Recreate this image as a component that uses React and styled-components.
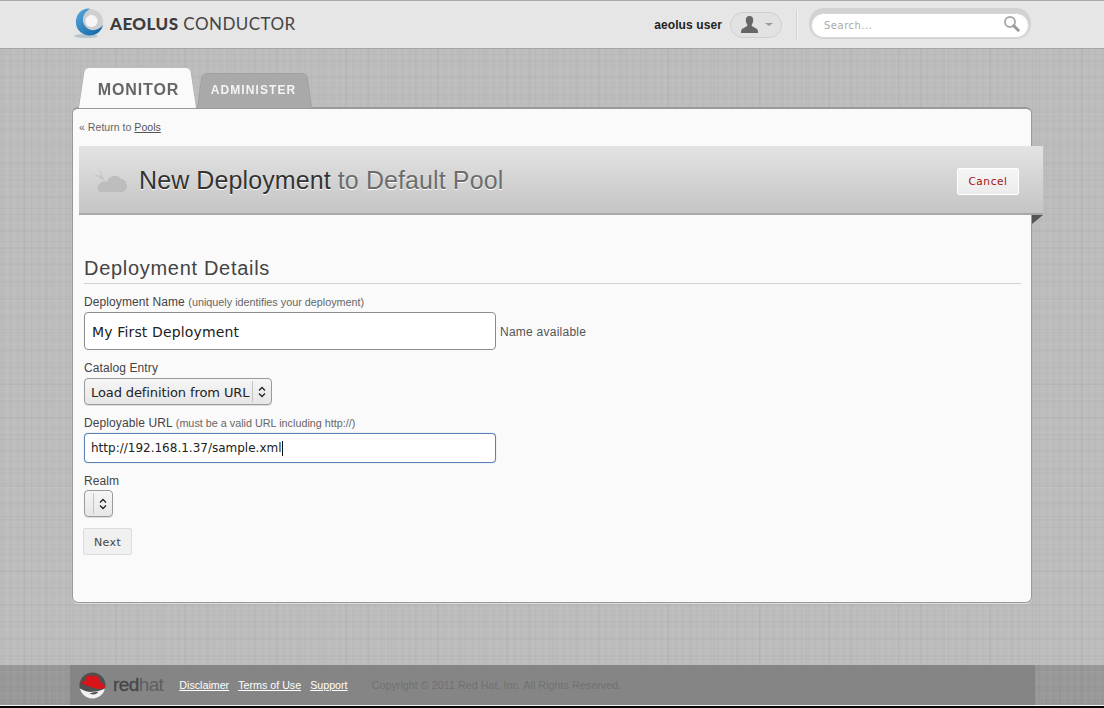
import React from 'react'
import styled, { createGlobalStyle } from 'styled-components'

const GlobalStyle = createGlobalStyle`
  html, body {
    margin: 0;
    padding: 0;
    background: #000;
  }
  * {
    box-sizing: border-box;
  }
`

const linen = `
  repeating-linear-gradient(90deg, rgba(255,255,255,.035) 0 1px, transparent 1px 3px, rgba(0,0,0,.025) 3px 4px, transparent 4px 7px),
  repeating-linear-gradient(0deg, rgba(255,255,255,.03) 0 1px, transparent 1px 4px, rgba(0,0,0,.025) 4px 5px, transparent 5px 11px),
  repeating-linear-gradient(90deg, rgba(0,0,0,.02) 0 2px, transparent 2px 23px),
  repeating-linear-gradient(0deg, rgba(0,0,0,.018) 0 2px, transparent 2px 17px)
`

const Page = styled.div`
  width: 1104px;
  height: 708px;
  overflow: hidden;
  display: flex;
  flex-direction: column;
  background-color: #bdbdbd;
  background-image: ${linen};
  font-family: 'Liberation Sans', Arial, sans-serif;
  color: #444;
`

const Header = styled.header`
  height: 49px;
  flex: none;
  display: flex;
  align-items: center;
  padding: 0 73px 0 73px;
  background: #e6e6e6;
  border-top: 1px solid #a9a9a9;
  border-bottom: 1px solid #a6a6a6;
`

const Brand = styled.div`
  display: flex;
  align-items: center;
  gap: 5px;
  margin-top: -3px;
`

const BrandName = styled.div`
  font-family: Lato, 'Liberation Sans', sans-serif;
  font-size: 17px;
  letter-spacing: 0.45px;
  color: #444;
  white-space: nowrap;

  b {
    font-weight: 900;
    color: #3c3c3c;
  }
`

const UserArea = styled.div`
  margin-left: auto;
  display: flex;
  align-items: center;
`

const UserName = styled.span`
  font-size: 12px;
  font-weight: 700;
  letter-spacing: 0.1px;
  color: #222;
  margin-right: 8px;
`

const UserPill = styled.div`
  width: 52px;
  height: 26px;
  border: 1px solid #cfcfcf;
  border-radius: 13px;
  background: #e2e2e2;
  display: flex;
  align-items: center;
  padding-left: 9px;
  gap: 6px;
`

const Caret = styled.span`
  width: 0;
  height: 0;
  border-left: 4px solid transparent;
  border-right: 4px solid transparent;
  border-top: 3px solid #999;
`

const Divider = styled.div`
  width: 2px;
  height: 30px;
  margin: 0 11px 0 14px;
  background: #d2d2d2;
  border-right: 1px solid #f4f4f4;
`

const SearchRing = styled.div`
  width: 222px;
  height: 31px;
  padding: 5px 2px 1px;
  background: #d2d2d2;
  border-radius: 15px;
  margin-top: -3px;
`

const SearchBox = styled.div`
  height: 25px;
  background: #fff;
  border: 1px solid #d6d6d6;
  border-radius: 13px;
  display: flex;
  align-items: center;
  justify-content: space-between;
  padding: 0 8px 4px 12px;
  font-family: 'DejaVu Sans', sans-serif;
  font-size: 10px;
  letter-spacing: 0.5px;
  color: #aaa;

  span {
    margin-top: 5px;
  }
`

const Main = styled.main`
  flex: 1;
  padding: 18px 72px 0;
`

const Tabs = styled.nav`
  display: flex;
  align-items: flex-end;
  height: 41px;
  margin-left: 6px;
  position: relative;
  z-index: 1;
  margin-bottom: -1px;
`

const Tab = styled.a`
  position: relative;
  display: flex;
  align-items: center;
  justify-content: center;
  width: ${p => (p.$active ? '119px' : '115px')};
  height: ${p => (p.$active ? '41px' : '35px')};
  font-weight: 700;
  font-size: ${p => (p.$active ? '16px' : '12px')};
  letter-spacing: ${p => (p.$active ? '0.9px' : '1.1px')};
  color: ${p => (p.$active ? '#666' : '#f4f4f4')};
  padding: ${p => (p.$active ? '5px 0 0 2px' : '0 2px 2px 0')};

  &::before {
    content: '';
    position: absolute;
    inset: ${p => (p.$active ? '-6px' : '-4px')} 0 0 0;
    z-index: -1;
    background: ${p => (p.$active ? '#fafafa' : '#a9a9a9')};
    border: 1px solid ${p => (p.$active ? '#b5b5b5' : '#a0a0a0')};
    border-bottom: none;
    border-radius: 6px 6px 0 0;
    transform-origin: bottom;
    transform: perspective(90px) rotateX(${p => (p.$active ? '13deg' : '12deg')});
  }
`

const Panel = styled.section`
  height: 496px;
  background: #fafafa;
  border: 1px solid #999;
  border-top: 2px solid #9a9a9a;
  border-radius: 6px;
  box-shadow: 0 1px 0 #ddd;
  padding-top: 11px;
`

const Breadcrumb = styled.div`
  height: 14px;
  margin-left: 6px;
  font-size: 10.6px;
  line-height: 14px;
  color: #666;

  a {
    color: #555;
    text-decoration: underline;
  }
`

const Banner = styled.div`
  position: relative;
  height: 69px;
  margin: 12px -12px 0 6px;
  display: flex;
  align-items: center;
  padding: 0 24px 0 14px;
  background: linear-gradient(#e3e3e3, #c5c5c5);
  border-bottom: 2px solid #a9a9a9;

  &::after {
    content: '';
    position: absolute;
    right: 0;
    bottom: -11px;
    border-top: 9px solid #555;
    border-right: 11px solid transparent;
  }
`

const BannerTitle = styled.h1`
  margin: 1px 0 0 12px;
  font-size: 25px;
  line-height: 30px;
  font-weight: 400;
  letter-spacing: 0.1px;
  color: #333;
  text-shadow: 0 1px 0 #fff;
  white-space: nowrap;

  span {
    color: #6c6c6c;
  }
`

const CancelButton = styled.button`
  margin: 3px 0 0 auto;
  width: 62px;
  height: 27px;
  padding: 0;
  background: linear-gradient(#f6f6f6, #ececec);
  border: 1px solid #fff;
  border-radius: 2px;
  font-family: 'DejaVu Sans', sans-serif;
  font-size: 10.5px;
  letter-spacing: 0.6px;
  color: #a31010;
`

const Form = styled.form`
  margin: 42px 10px 0 11px;
`

const SectionTitle = styled.h2`
  margin: 0 0 11px;
  height: 27px;
  padding-bottom: 3px;
  border-bottom: 1px solid #d2d2d2;
  font-size: 20px;
  line-height: 22px;
  font-weight: 400;
  letter-spacing: 0.7px;
  color: #444;
`

const Label = styled.label`
  display: block;
  height: 14px;
  font-size: 12px;
  line-height: 14px;
  letter-spacing: 0.1px;
  color: #444;

  small {
    font-size: 10.8px;
    letter-spacing: 0;
    color: #666;
  }
`

const Row = styled.div`
  display: flex;
  align-items: center;
  gap: 4px;
  margin-top: ${p => p.$top || 3}px;
  margin-bottom: ${p => p.$bottom || 11}px;
`

const TextInput = styled.div`
  width: 412px;
  height: ${p => (p.$focused ? '30px' : '38px')};
  display: flex;
  align-items: center;
  padding: ${p => (p.$focused ? '0 6px' : '2px 7px 0')};
  background: #fff;
  border: 1px solid ${p => (p.$focused ? '#5b80b5' : '#8c8c8c')};
  border-radius: 4px;
  box-shadow: ${p => (p.$focused ? '0 0 1px #8aa6cc' : 'none')};
  font-family: 'DejaVu Sans', sans-serif;
  font-size: ${p => (p.$focused ? '12px' : '14px')};
  letter-spacing: ${p => (p.$focused ? '0' : '0.15px')};
  color: #222;
  white-space: nowrap;
`

const TextCaret = styled.i`
  display: inline-block;
  width: 1px;
  height: 15px;
  background: #111;
`

const Hint = styled.span`
  font-size: 12px;
  letter-spacing: 0.25px;
  color: #555;
  margin-top: 2px;
`

const Select = styled.div`
  height: 27px;
  display: inline-flex;
  align-items: stretch;
  background: linear-gradient(#f6f6f6, #e6e6e6);
  border: 1px solid #9a9a9a;
  border-radius: 4px;
  font-family: 'DejaVu Sans', sans-serif;
  font-size: 13px;
  letter-spacing: -0.1px;
  line-height: 27px;
  color: #222;
  box-shadow: 0 1px 0 #ddd;
`

const SelectValue = styled.span`
  display: block;
  min-width: 8px;
  padding: ${p => (p.$empty ? '0' : '0 3px 0 6px')};
  white-space: nowrap;
`

const SelectArrows = styled.span`
  width: 19px;
  display: flex;
  align-items: center;
  justify-content: center;
  border-left: 1px solid #c4c4c4;
  margin: 2px 0;
`

const NextButton = styled.button`
  display: block;
  width: 49px;
  height: 27px;
  margin: 11px 0 0 -1px;
  padding: 2px 0 0;
  background: #f0f0f0;
  border: 1px solid #dcdcdc;
  border-radius: 2px;
  font-family: 'DejaVu Sans', sans-serif;
  font-size: 11px;
  letter-spacing: 0.4px;
  color: #444;
`

const Footer = styled.footer`
  height: 40px;
  flex: none;
  background-color: #999;
  background-image: ${linen};
  display: flex;
`

const FooterInner = styled.div`
  width: 965px;
  margin-left: 70px;
  padding-left: 9px;
  display: flex;
  align-items: center;
  background: #858585;
  font-size: 10.7px;
`

const FooterLogo = styled.div`
  display: flex;
  align-items: center;
  gap: 7px;
  margin-right: 16px;
`

const LogoWord = styled.span`
  font-size: 19px;
  letter-spacing: -0.6px;
  color: #474747;
  -webkit-text-stroke: 0.3px #474747;

  em {
    font-style: normal;
    color: #5f5f5f;
    -webkit-text-stroke: 0;
  }
`

const FooterLink = styled.a`
  color: #fff;
  text-decoration: underline;
  margin-right: 9px;
`

const Copyright = styled.span`
  margin-left: 15px;
  font-size: 10.8px;
  color: #717171;
`

const BottomEdge = styled.div`
  height: 3px;
  flex: none;
  background: linear-gradient(#f2f2f2 0 1px, #000 1px);
`

function AeolusLogo() {
  return (
    <svg width="32" height="32" viewBox="0 0 32 32">
      <defs>
        <linearGradient id="aeolusBlue" x1="0" y1="0" x2="1" y2="1">
          <stop offset="0" stopColor="#5aa9dd" />
          <stop offset="1" stopColor="#0a62a3" />
        </linearGradient>
      </defs>
      <ellipse cx="13" cy="29" rx="12" ry="2" fill="#b8c4cc" />
      <circle cx="17" cy="15" r="13" fill="#cfcfcf" />
      <path d="M17 1.5 C8 1 2 8 3 17 C4 25 12 30 20 28 C25 27 29 23 30 18 C26 23 19 25 14 21 C9 17 9 10 12 6 C13.500 4.500 15 3 17 1.500 Z" fill="url(#aeolusBlue)" />
      <circle cx="18.500" cy="14" r="6" fill="#f6f6f6" />
    </svg>
  )
}

function UserIcon() {
  return (
    <svg width="19" height="19" viewBox="0 0 19 19">
      <path d="M9.5 1 C6.8 1 5.6 3 5.8 5.4 C6 7.6 6.8 9 7.4 9.8 C7.6 11 6.6 11.6 4.6 12.4 C2.6 13.2 1 14 1 16.6 L1 18 L18 18 L18 16.6 C18 14 16.4 13.2 14.4 12.4 C12.4 11.6 11.4 11 11.6 9.8 C12.2 9 13 7.6 13.2 5.4 C13.4 3 12.2 1 9.5 1 Z" fill="#666" />
    </svg>
  )
}

function SearchIcon() {
  return (
    <svg width="17" height="17" viewBox="0 0 17 17">
      <circle cx="7" cy="7" r="5" fill="none" stroke="#aaa" strokeWidth="2" />
      <path d="M10.8 10.8 L15.2 15.2" stroke="#999" strokeWidth="3" strokeLinecap="round" />
    </svg>
  )
}

function CloudIcon() {
  return (
    <svg width="34" height="28" viewBox="0 0 34 28">
      <path d="M8 26 C4 26 3 20 7 18 C8 15 12 15 14 16 C15 10 24 7 28 13 C32 13 34 17 34 20 C34 24 31 26 28 26 Z" fill="#bdbdbd" />
      <path d="M5 1 L12 15 L0 8 L8 10 Z" fill="#c6c6c6" />
    </svg>
  )
}

function ChevronsIcon() {
  return (
    <svg width="8" height="12" viewBox="0 0 8 12">
      <path d="M1 4.5 L4 1.5 L7 4.5 M1 7.5 L4 10.5 L7 7.5" fill="none" stroke="#222" strokeWidth="1.3" />
    </svg>
  )
}

function RedHatLogo() {
  return (
    <svg width="27" height="27" viewBox="0 0 28 28">
      <circle cx="14" cy="14" r="13.5" fill="#4f4f4f" />
      <path d="M1 17 C6 20 11 21 14 20.500 C19 20 23 19 27 17 C26 23 20 27.500 14 27.500 C8 27.500 2 23 1 17 Z" fill="#f2f2f2" />
      <path d="M9 4 C12 3 14 5 17 4 C20 3 21 7 22 10 C25 12 27 13 27 15 C27 18 22 18 18 17 C12 16 5 14 2 11 C2 9 5 9 7 10 C7 8 7 5 9 4 Z" fill="#d8141b" />
      <path d="M11 22 C14 21 17 21 20 20.500 C18 24 14 24 11 22 Z" fill="#4f4f4f" />
    </svg>
  )
}

export default function App() {
  return (
    <Page>
      <GlobalStyle />
      <Header>
        <Brand>
          <AeolusLogo />
          <BrandName><b>AEOLUS</b> CONDUCTOR</BrandName>
        </Brand>
        <UserArea>
          <UserName>aeolus user</UserName>
          <UserPill>
            <UserIcon />
            <Caret />
          </UserPill>
          <Divider />
          <SearchRing>
            <SearchBox>
              <span>Search...</span>
              <SearchIcon />
            </SearchBox>
          </SearchRing>
        </UserArea>
      </Header>

      <Main>
        <Tabs>
          <Tab $active>MONITOR</Tab>
          <Tab>ADMINISTER</Tab>
        </Tabs>
        <Panel>
          <Breadcrumb>« Return to <a>Pools</a></Breadcrumb>
          <Banner>
            <CloudIcon />
            <BannerTitle>New Deployment <span>to Default Pool</span></BannerTitle>
            <CancelButton type="button">Cancel</CancelButton>
          </Banner>
          <Form>
            <SectionTitle>Deployment Details</SectionTitle>

            <Label>Deployment Name <small>(uniquely identifies your deployment)</small></Label>
            <Row $top={3} $bottom={11}>
              <TextInput>My First Deployment</TextInput>
              <Hint>Name available</Hint>
            </Row>

            <Label>Catalog Entry</Label>
            <Row $top={3} $bottom={11}>
              <Select>
                <SelectValue>Load definition from URL</SelectValue>
                <SelectArrows><ChevronsIcon /></SelectArrows>
              </Select>
            </Row>

            <Label>Deployable URL <small>(must be a valid URL including http://)</small></Label>
            <Row $top={3} $bottom={11}>
              <TextInput $focused>http://192.168.1.37/sample.xml<TextCaret /></TextInput>
            </Row>

            <Label>Realm</Label>
            <Row $top={2} $bottom={11}>
              <Select>
                <SelectValue $empty />
                <SelectArrows><ChevronsIcon /></SelectArrows>
              </Select>
            </Row>

            <NextButton type="button">Next</NextButton>
          </Form>
        </Panel>
      </Main>

      <Footer>
        <FooterInner>
          <FooterLogo>
            <RedHatLogo />
            <LogoWord>red<em>hat</em></LogoWord>
          </FooterLogo>
          <FooterLink>Disclaimer</FooterLink>
          <FooterLink>Terms of Use</FooterLink>
          <FooterLink>Support</FooterLink>
          <Copyright>Copyright © 2011 Red Hat, Inc. All Rights Reserved.</Copyright>
        </FooterInner>
      </Footer>
      <BottomEdge />
    </Page>
  )
}
